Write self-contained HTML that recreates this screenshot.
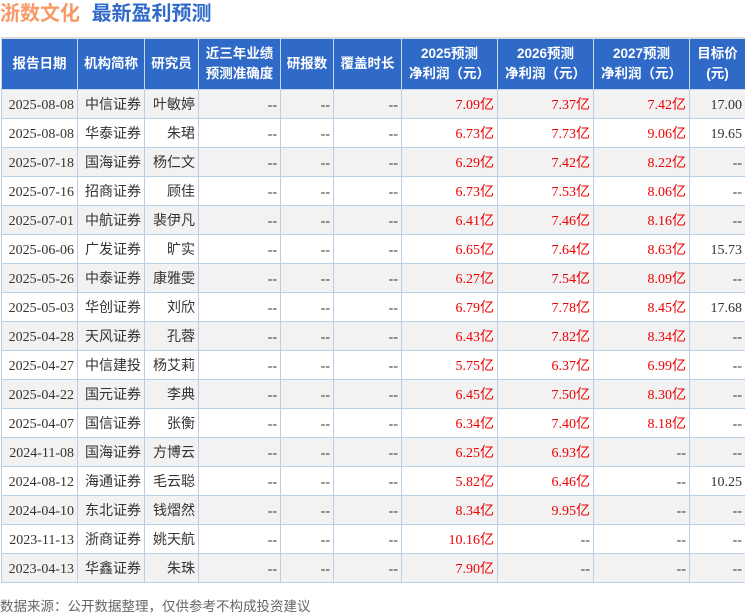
<!DOCTYPE html><html><head><meta charset="utf-8"><style>
body{margin:0;width:745px;height:613px;background:#fff;font-family:"Liberation Serif","Noto Sans CJK SC",serif;overflow:hidden;position:relative}
.t{position:absolute;left:0;top:1px;font:bold 20px/26px "Liberation Sans","Noto Sans CJK SC",sans-serif;white-space:nowrap}
table{position:absolute;left:1px;top:37px;border-collapse:collapse;width:744px;table-layout:fixed;border-top:2px solid #ddd}
th{background:#2f6ac8;color:#fff;font:bold 13.5px "Liberation Sans","Noto Sans CJK SC",sans-serif;height:50px;border:1px solid #c8d8ec;text-align:center;line-height:20px;padding:0}
td{height:28px;line-height:28px;vertical-align:middle;border:1px solid #b8d0ea;font-size:14px;color:#333;text-align:right;padding:0 3px 0 0;white-space:nowrap}
td:not(.c){padding-top:4px;height:24px;line-height:24px}
td.c{font-family:"Liberation Sans","Noto Sans CJK SC",sans-serif;font-size:14px}
tr:nth-child(even) td{background:#f2f2f2}
.r{color:#e00}
.f{position:absolute;left:0;top:595px;font:13.5px "Liberation Sans","Noto Sans CJK SC",sans-serif;color:#666}
</style></head><body>
<div class="t"><span style="color:#f79a6a">浙数文化</span> <span style="color:#2f6ac8;margin-left:6px">最新盈利预测</span></div>
<table>
<colgroup><col style="width:76px"><col style="width:67px"><col style="width:54px"><col style="width:82px"><col style="width:53px"><col style="width:68px"><col style="width:96px"><col style="width:96px"><col style="width:96px"><col style="width:56px"></colgroup>
<tr><th>报告日期</th><th>机构简称</th><th>研究员</th><th>近三年业绩<br>预测准确度</th><th>研报数</th><th>覆盖时长</th><th>2025预测<br>净利润（元）</th><th>2026预测<br>净利润（元）</th><th>2027预测<br>净利润（元）</th><th>目标价<br>(元)</th></tr>
<tr><td>2025-08-08</td><td class="c">中信证券</td><td class="c">叶敏婷</td><td>--</td><td>--</td><td>--</td><td class="r">7.09亿</td><td class="r">7.37亿</td><td class="r">7.42亿</td><td>17.00</td></tr>
<tr><td>2025-08-08</td><td class="c">华泰证券</td><td class="c">朱珺</td><td>--</td><td>--</td><td>--</td><td class="r">6.73亿</td><td class="r">7.73亿</td><td class="r">9.06亿</td><td>19.65</td></tr>
<tr><td>2025-07-18</td><td class="c">国海证券</td><td class="c">杨仁文</td><td>--</td><td>--</td><td>--</td><td class="r">6.29亿</td><td class="r">7.42亿</td><td class="r">8.22亿</td><td>--</td></tr>
<tr><td>2025-07-16</td><td class="c">招商证券</td><td class="c">顾佳</td><td>--</td><td>--</td><td>--</td><td class="r">6.73亿</td><td class="r">7.53亿</td><td class="r">8.06亿</td><td>--</td></tr>
<tr><td>2025-07-01</td><td class="c">中航证券</td><td class="c">裴伊凡</td><td>--</td><td>--</td><td>--</td><td class="r">6.41亿</td><td class="r">7.46亿</td><td class="r">8.16亿</td><td>--</td></tr>
<tr><td>2025-06-06</td><td class="c">广发证券</td><td class="c">旷实</td><td>--</td><td>--</td><td>--</td><td class="r">6.65亿</td><td class="r">7.64亿</td><td class="r">8.63亿</td><td>15.73</td></tr>
<tr><td>2025-05-26</td><td class="c">中泰证券</td><td class="c">康雅雯</td><td>--</td><td>--</td><td>--</td><td class="r">6.27亿</td><td class="r">7.54亿</td><td class="r">8.09亿</td><td>--</td></tr>
<tr><td>2025-05-03</td><td class="c">华创证券</td><td class="c">刘欣</td><td>--</td><td>--</td><td>--</td><td class="r">6.79亿</td><td class="r">7.78亿</td><td class="r">8.45亿</td><td>17.68</td></tr>
<tr><td>2025-04-28</td><td class="c">天风证券</td><td class="c">孔蓉</td><td>--</td><td>--</td><td>--</td><td class="r">6.43亿</td><td class="r">7.82亿</td><td class="r">8.34亿</td><td>--</td></tr>
<tr><td>2025-04-27</td><td class="c">中信建投</td><td class="c">杨艾莉</td><td>--</td><td>--</td><td>--</td><td class="r">5.75亿</td><td class="r">6.37亿</td><td class="r">6.99亿</td><td>--</td></tr>
<tr><td>2025-04-22</td><td class="c">国元证券</td><td class="c">李典</td><td>--</td><td>--</td><td>--</td><td class="r">6.45亿</td><td class="r">7.50亿</td><td class="r">8.30亿</td><td>--</td></tr>
<tr><td>2025-04-07</td><td class="c">国信证券</td><td class="c">张衡</td><td>--</td><td>--</td><td>--</td><td class="r">6.34亿</td><td class="r">7.40亿</td><td class="r">8.18亿</td><td>--</td></tr>
<tr><td>2024-11-08</td><td class="c">国海证券</td><td class="c">方博云</td><td>--</td><td>--</td><td>--</td><td class="r">6.25亿</td><td class="r">6.93亿</td><td>--</td><td>--</td></tr>
<tr><td>2024-08-12</td><td class="c">海通证券</td><td class="c">毛云聪</td><td>--</td><td>--</td><td>--</td><td class="r">5.82亿</td><td class="r">6.46亿</td><td>--</td><td>10.25</td></tr>
<tr><td>2024-04-10</td><td class="c">东北证券</td><td class="c">钱熠然</td><td>--</td><td>--</td><td>--</td><td class="r">8.34亿</td><td class="r">9.95亿</td><td>--</td><td>--</td></tr>
<tr><td>2023-11-13</td><td class="c">浙商证券</td><td class="c">姚天航</td><td>--</td><td>--</td><td>--</td><td class="r">10.16亿</td><td>--</td><td>--</td><td>--</td></tr>
<tr><td>2023-04-13</td><td class="c">华鑫证券</td><td class="c">朱珠</td><td>--</td><td>--</td><td>--</td><td class="r">7.90亿</td><td>--</td><td>--</td><td>--</td></tr>
</table>
<div class="f">数据来源：公开数据整理，仅供参考不构成投资建议</div>
</body></html>
